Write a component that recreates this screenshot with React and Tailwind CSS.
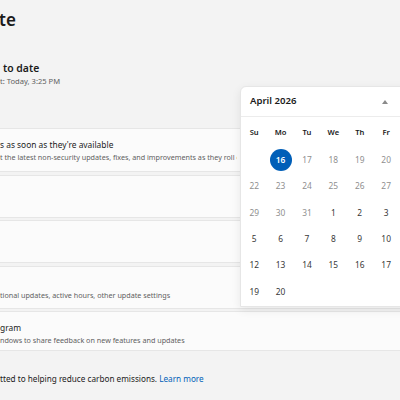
const font = { fontFamily: '"Segoe UI", "Noto Sans", "Open Sans", sans-serif' }

const weekdays = ['Su', 'Mo', 'Tu', 'We', 'Th', 'Fr']

const rows = [
  [null, { d: 16, today: true }, { d: 17, dim: true }, { d: 18, dim: true }, { d: 19, dim: true }, { d: 20, dim: true }],
  [22, 23, 24, 25, 26, 27].map((d) => ({ d, dim: true })),
  [{ d: 29, dim: true }, { d: 30, dim: true }, { d: 31, dim: true }, { d: 1 }, { d: 2 }, { d: 3 }],
  [5, 6, 7, 8, 9, 10].map((d) => ({ d })),
  [12, 13, 14, 15, 16, 17].map((d) => ({ d })),
  [{ d: 19 }, { d: 20 }, null, null, null, null],
]

function Card({ title, sub, h, pt = 'pt-[10px]' }) {
  return (
    <div className={`rounded-[4px] border border-[#e6e6e6] bg-[#fbfbfb] pl-[9px] ${pt} ${h}`}>
      <div className="w-[237px] overflow-hidden">
        {title && <p className="text-[8.4px] leading-[12px] text-[#1b1b1b] whitespace-nowrap">{title}</p>}
        {sub && <p className="mt-px text-[7.2px] leading-[10px] text-[#5f5f5f] whitespace-nowrap">{sub}</p>}
      </div>
    </div>
  )
}

function Calendar() {
  return (
    <div className="absolute left-[240px] top-[86px] h-[221px] w-[190px] rounded-tl-[6px] border border-[#e6e6e6] bg-white shadow-[0_3px_10px_rgba(0,0,0,0.08)]">
      <div className="flex h-[30px] items-center justify-between border-b border-[#ececec] pl-[9px] pr-[41px]">
        <span className="text-[9.6px] font-semibold text-[#1b1b1b]">April 2026</span>
        <svg width="6" height="4" viewBox="0 0 6 4"><path d="M3 0L6 4H0Z" fill="#8a8a8a" /></svg>
      </div>
      <div className="grid grid-cols-[repeat(6,26.4px)] pt-[2px]">
        {weekdays.map((w) => (
          <div key={w} className="flex h-[28px] items-center justify-center text-[7.6px] font-semibold text-[#1b1b1b]">{w}</div>
        ))}
        {rows.flat().map((c, i) => (
          <div key={i} className="flex h-[26.4px] items-center justify-center">
            {c && c.today && (
              <span className="flex h-[22px] w-[22px] items-center justify-center rounded-full bg-[#005fb8] text-[8.4px] font-semibold text-white">{c.d}</span>
            )}
            {c && !c.today && (
              <span className={`text-[8.4px] ${c.dim ? 'text-[#8f8f8f]' : 'text-[#383838]'}`}>{c.d}</span>
            )}
          </div>
        ))}
      </div>
    </div>
  )
}

export default function App() {
  return (
    <div className="relative h-[400px] w-[400px] overflow-hidden bg-[#f3f3f3]" style={font}>
      <div className="flex flex-col">
        <h1 className="ml-[-1px] mt-[9px] text-[17px] font-semibold leading-[22px] text-[#1b1b1b]">te</h1>
        <p className="ml-[3px] mt-[30px] text-[10.4px] font-semibold leading-[14px] text-[#1b1b1b]">to date</p>
        <p className="ml-0 text-[7.6px] leading-[12px] text-[#5f5f5f]">t: Today, 3:25 PM</p>

        <div className="ml-[-10px] mr-[-20px] mt-[41px] flex flex-col gap-[2.5px]">
          <Card h="h-[44px]" title="s as soon as they're available" sub="t the latest non-security updates, fixes, and improvements as they roll o" />
          <Card h="h-[43px]" />
          <Card h="h-[43px]" />
          <Card h="h-[43px]" pt="pt-[22px]" sub="tional updates, active hours, other update settings" />
          <Card h="h-[40px]" title="gram" sub="ndows to share feedback on new features and updates" />
        </div>

        <p className="mt-[22px] text-[8.2px] leading-[12px] text-[#1b1b1b] whitespace-nowrap">
          tted to helping reduce carbon emissions. <span className="text-[#005fb8]">Learn more</span>
        </p>
      </div>
      <Calendar />
    </div>
  )
}
